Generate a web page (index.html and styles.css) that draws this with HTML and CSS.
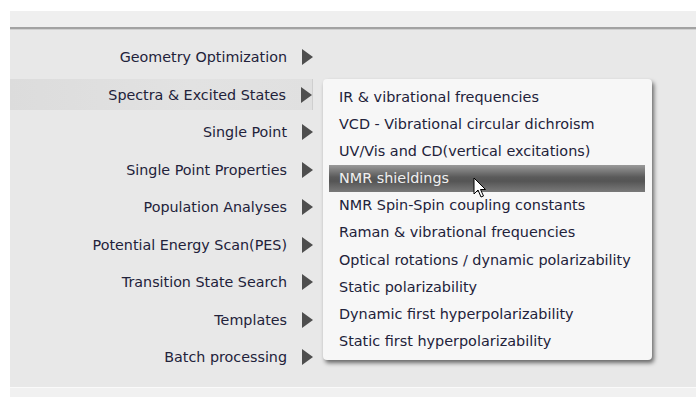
FILE: index.html
```html
<!DOCTYPE html>
<html lang="en">
<head>
    <meta charset="UTF-8">
    <title>Tasks</title>
    <link rel="stylesheet" href="styles.css">
</head>
<body>
    <div class="panel">
        <div class="panel-head"></div>
        <div class="task-area">
            <ul class="tasks">
                <li class="task"><span>Geometry Optimization</span><i class="arrow"></i></li>
                <li class="task active"><span>Spectra &amp; Excited States</span><i class="arrow"></i></li>
                <li class="task"><span>Single Point</span><i class="arrow"></i></li>
                <li class="task"><span>Single Point Properties</span><i class="arrow"></i></li>
                <li class="task"><span>Population Analyses</span><i class="arrow"></i></li>
                <li class="task"><span>Potential Energy Scan(PES)</span><i class="arrow"></i></li>
                <li class="task"><span>Transition State Search</span><i class="arrow"></i></li>
                <li class="task"><span>Templates</span><i class="arrow"></i></li>
                <li class="task"><span>Batch processing</span><i class="arrow"></i></li>
            </ul>
            <ul class="submenu">
                <li>IR &amp; vibrational frequencies</li>
                <li>VCD - Vibrational circular dichroism</li>
                <li>UV/Vis and CD(vertical excitations)</li>
                <li class="hover">NMR shieldings</li>
                <li>NMR Spin-Spin coupling constants</li>
                <li>Raman &amp; vibrational frequencies</li>
                <li>Optical rotations / dynamic polarizability</li>
                <li>Static polarizability</li>
                <li>Dynamic first hyperpolarizability</li>
                <li>Static first hyperpolarizability</li>
            </ul>
            <!-- mouse pointer -->
            <svg class="cursor" width="14" height="22" viewBox="0 0 14 22">
                <path d="M1 1 L1 17 L5 13 L8 20 L10.5 19 L7.5 12.5 L12.5 12.5 Z" fill="#fff" stroke="#000" stroke-width="1" stroke-linejoin="round"/>
            </svg>
        </div>
        <div class="panel-foot"></div>
    </div>
</body>
</html>
```

FILE: styles.css
```css
body {
    margin: 0;
    background-color: #FFFFFF;
    font-family: "DejaVu Sans", Verdana, sans-serif;
}
.panel {
    margin: 11px 0 0 10px;
    height: 386px;
    display: flex;
    flex-direction: column;
    background-color: #E8E8E8;
}
.panel-head {
    height: 16px;
    background-color: #EFEFEF;
    border-bottom: 2px solid #A2A2A2;
    box-shadow: 0 1px 0 #D0D0D0;
}
.task-area {
    position: relative;
    height: 358px;
}
.tasks {
    list-style: none;
    margin: 0;
    padding: 12.5px 0 0 0;
    width: 303px;
    display: flex;
    flex-direction: column;
    gap: 6.5px;
}
.task {
    height: 31px;
    display: flex;
    align-items: center;
    justify-content: flex-end;
    gap: 15px;
    font-size: 14.3px;
    color: #22223A;
}
.task.active {
    background: linear-gradient(to right, #DCDCDC, #E2E2E2 60%, #E0E0E0);
    border-right: 1px solid #CFCFCF;
}
.arrow {
    width: 0;
    height: 0;
    border-top: 8px solid transparent;
    border-bottom: 8px solid transparent;
    border-left: 11px solid #4E4E4E;
}
.submenu {
    position: absolute;
    left: 313px;
    top: 50px;
    width: 329px;
    margin: 0;
    padding: 4.5px 0;
    box-sizing: border-box;
    list-style: none;
    background-color: #F7F7F7;
    border-radius: 4px;
    box-shadow: 2px 3px 4px rgba(0, 0, 0, 0.55);
}
.submenu li {
    height: 27.2px;
    line-height: 27.2px;
    margin: 0 7px 0 6px;
    padding-left: 10px;
    font-size: 14.4px;
    color: #22223A;
    white-space: nowrap;
}
.submenu li.hover {
    color: #F0F0F0;
    background: linear-gradient(to bottom, #9A9A9A, #5A5A5A 45%, #555555 60%, #7A7A7A);
}
.cursor {
    position: absolute;
    left: 463px;
    top: 148px;
}
.panel-foot {
    flex: 1;
    background-color: #F1F1F1;
    border-top: 1px solid #FAFAFA;
}
```
